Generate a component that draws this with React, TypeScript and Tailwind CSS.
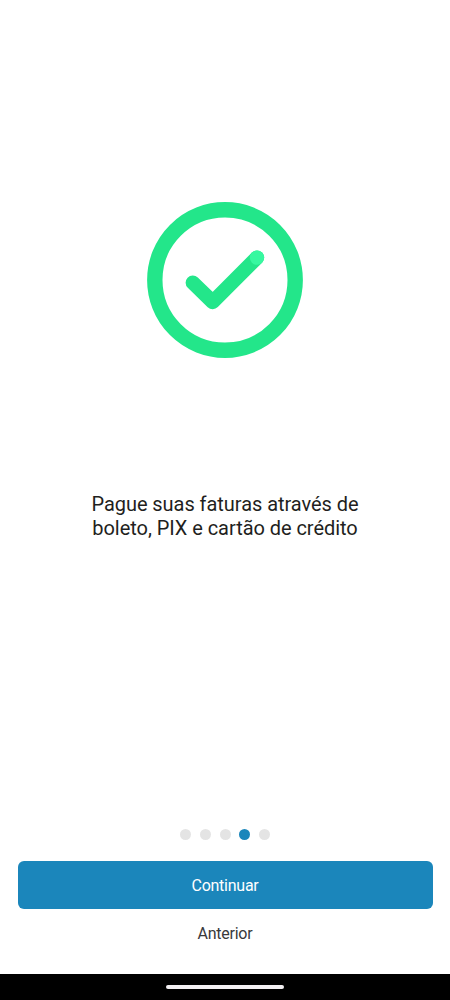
const steps = ["1", "2", "3", "4", "5"];
const currentStep = 3;

function SuccessIcon() {
  return (
    <svg className="h-[156px] w-[156px]" viewBox="0 0 156 156" fill="none" aria-hidden="true">
      <circle cx="78" cy="78" r="70.2" stroke="#23e68a" strokeWidth="15.4" />
      <path
        d="M45.8 80.7L65.7 100L110 55.6"
        stroke="#23e68a"
        strokeWidth="14.4"
        strokeLinecap="round"
        strokeLinejoin="round"
      />
      <circle cx="110" cy="55.6" r="7.2" fill="#37f8a0" />
    </svg>
  );
}

function StepDots() {
  return (
    <div className="flex justify-center gap-[8.6px]">
      {steps.map((step, index) => (
        <span
          key={step}
          className={`h-[11px] w-[11px] rounded-full ${index === currentStep ? "bg-[#1b86bb]" : "bg-[#e4e4e4]"}`}
        />
      ))}
    </div>
  );
}

export default function App() {
  return (
    <main className="flex h-[1000px] w-[450px] flex-col overflow-hidden bg-white font-[Roboto,sans-serif] text-[#1f1f21]">
      <section className="flex h-[829px] shrink-0 flex-col items-center pt-[202px]">
        <SuccessIcon />
        <p className="mt-[134px] text-center text-[20px] leading-[24px] tracking-[-0.05px]">
          Pague suas faturas através de
          <br />
          boleto, PIX e cartão de crédito
        </p>
      </section>

      <StepDots />

      <div className="mt-[21px] flex flex-col px-[17.5px]">
        <button
          type="button"
          className="h-[48px] rounded-[6px] bg-[#1b86bb] pt-[2px] text-[16px] tracking-[-0.25px] text-white"
        >
          Continuar
        </button>
        <button type="button" className="h-[48px] pt-[2px] text-[16px] tracking-[-0.25px] text-[#39393b]">
          Anterior
        </button>
      </div>

      <div className="mt-auto flex h-[26px] items-center justify-center bg-black">
        <span className="h-[4.5px] w-[118px] rounded-full bg-[#f2f0f2]" />
      </div>
    </main>
  );
}
